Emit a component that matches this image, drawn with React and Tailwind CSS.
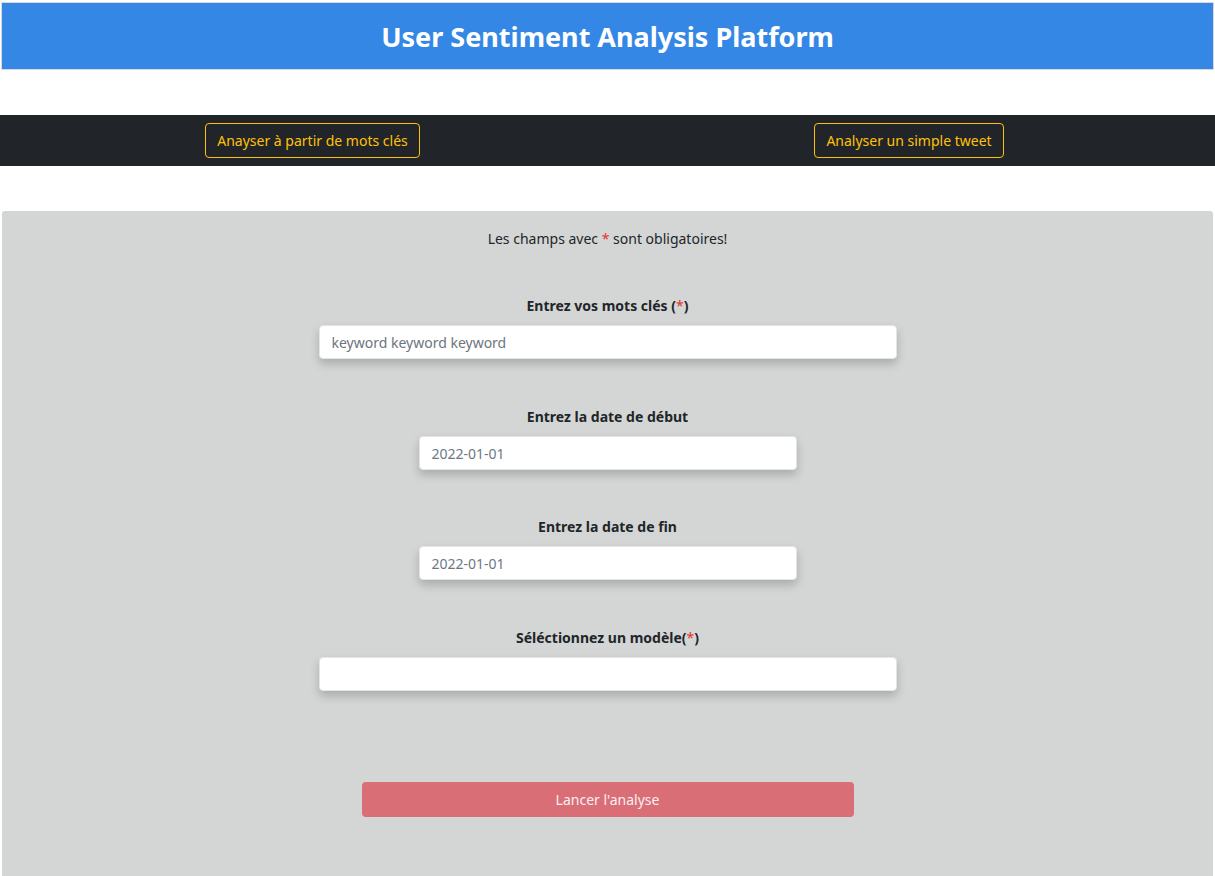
export default function App() {
  const font = { fontFamily: '"Noto Sans", "Open Sans", sans-serif' };

  const Field = ({ label, star, parens, width, value, placeholder, className }) => (
    <div className={`flex flex-col items-center ${className || ""}`}>
      <div className="h-[20px] text-[14px] font-bold leading-[20px] text-[#212529]">
        {label}
        {star && (
          <>
            {parens ? " (" : "("}
            <span className="font-normal text-[#e3342f]">*</span>)
          </>
        )}
      </div>
      <div
        className={`mt-[9px] flex h-[34px] items-center rounded-[4px] border border-[#e3e5e7] bg-white px-3 text-[14px] shadow-[0_5px_10px_rgba(0,0,0,0.2)] ${width}`}
      >
        {value && <span className="text-[#6b7785]">{value}</span>}
        {placeholder && <span className="text-[#6c757d]">{placeholder}</span>}
      </div>
    </div>
  );

  return (
    <div className="min-h-[876px] bg-white" style={font}>
      <div className="pt-[2px]">
        <div className="mx-[1px] flex h-[68px] items-center justify-center border border-[#d9d9d9] bg-[#3587e6] pt-[3px]">
          <h1 className="text-[27px] font-bold text-white">User Sentiment Analysis Platform</h1>
        </div>
      </div>

      <div className="mt-[45px] flex h-[51px] items-center bg-[#212529]">
        <button className="ml-[205px] h-[35px] w-[215px] rounded-[4px] border border-[#ffc107] text-[14px] text-[#ffc107]">
          Anayser à partir de mots clés
        </button>
        <button className="ml-[394px] h-[35px] w-[190px] rounded-[4px] border border-[#ffc107] text-[14px] text-[#ffc107]">
          Analyser un simple tweet
        </button>
      </div>

      <div className="mx-[2px] mt-[45px] flex h-[665px] flex-col items-center rounded-t-[3px] bg-[#d4d6d5] pt-[18px]">
        <div className="h-[20px] text-[14px] leading-[20px] text-[#212529]">
          Les champs avec <span className="text-[#e3342f]">*</span> sont obligatoires!
        </div>

        <Field className="mt-[47px]" label="Entrez vos mots clés" star parens width="w-[578px]" placeholder="keyword keyword keyword" />
        <Field className="mt-[48px]" label="Entrez la date de début" width="w-[378px]" value="2022-01-01" />
        <Field className="mt-[47px]" label="Entrez la date de fin" width="w-[378px]" value="2022-01-01" />
        <Field className="mt-[48px]" label="Séléctionnez un modèle" star width="w-[578px]" />

        <button className="mt-[91px] h-[35px] w-[492px] rounded-[4px] bg-[#d96e77] text-[14px] text-[#fbeef0]">
          Lancer l'analyse
        </button>
      </div>
    </div>
  );
}
